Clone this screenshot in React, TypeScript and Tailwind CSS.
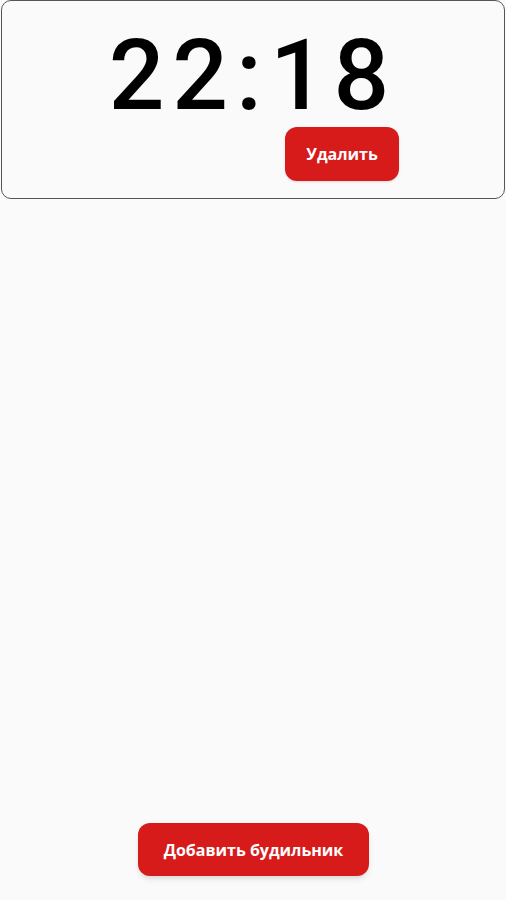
export default function App() {
  return (
    <div
      className="min-h-screen bg-[#fafafa] flex flex-col justify-between"
      style={{ fontFamily: "Roboto, 'Liberation Sans', sans-serif" }}
    >
      {/* Alarm card */}
      <div className="mx-[1px] border border-[#555] rounded-[10px] h-[199px] pt-[26px] flex flex-col">
        <div className="text-center text-[98px] leading-none text-black font-medium tracking-[8px]">22:18</div>
        <div className="mt-[2px] pl-[283px]">
          <button className="w-[114px] h-[54px] rounded-[12px] bg-[#d71b1b] text-white font-bold text-[16px] shadow-sm font-['Open_Sans',sans-serif]">
            Удалить
          </button>
        </div>
      </div>

      {/* Add button */}
      <div className="flex justify-center pb-[24px]">
        <button className="w-[231px] h-[53px] rounded-[12px] bg-[#d71b1b] text-white font-bold text-[16px] shadow-md ml-[1px] font-['Open_Sans',sans-serif]">
          Добавить будильник
        </button>
      </div>
    </div>
  );
}
